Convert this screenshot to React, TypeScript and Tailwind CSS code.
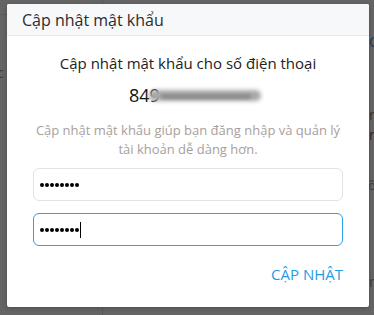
import React from 'react'

const FONT = { fontFamily: '"Open Sans", "Noto Sans", sans-serif' }

function Dots() {
  return (
    <span className="flex items-center gap-[1px]">
      {Array.from({ length: 8 }).map((_, i) => (
        <span key={i} className="h-[4px] w-[4px] rounded-full bg-black" />
      ))}
    </span>
  )
}

function PasswordField({ focused }: { focused?: boolean }) {
  return (
    <div
      className={
        'flex h-[33px] items-center rounded-[6px] bg-white px-[6px] ' +
        (focused ? 'border-[1.5px] border-[#2ba3ea]' : 'border border-[#e3e3e3]')
      }
    >
      <Dots />
      {focused && <span className="ml-[1px] h-[16px] w-px bg-black" />}
    </div>
  )
}

export default function App() {
  return (
    <div className="relative h-[315px] w-[374px] overflow-hidden bg-[#656565]" style={FONT}>
      {/* page behind the overlay */}
      <div aria-hidden="true" className="absolute left-[102px] top-0 h-full w-px bg-[#5a5a5a]" />
      <div aria-hidden="true" className="absolute left-0 top-[14px] h-px w-[8px] bg-[#5a5a5a]" />
      <span aria-hidden="true" className="absolute left-[-3px] top-[62px] text-[14px] text-[#3e3e3e]">c</span>
      <span aria-hidden="true" className="absolute left-[369px] top-[30px] text-[15px] text-[#1d3f5a]">C</span>
      <span aria-hidden="true" className="absolute left-[369px] top-[104px] text-[14px] text-[#3a3330]">r</span>
      <span aria-hidden="true" className="absolute left-[369px] top-[124px] text-[14px] text-[#2a2a2a]">n</span>
      <span aria-hidden="true" className="absolute left-[368px] top-[176px] text-[13px] text-[#3e3e3e]">ồ</span>
      <span aria-hidden="true" className="absolute left-[369px] top-[271px] text-[14px] text-[#3e3e3e]">n</span>

      <div className="pl-[7px] pt-[4px]">
        <div className="relative flex h-[303px] w-[362px] flex-col rounded-[2px] bg-white shadow-[0_1px_4px_rgba(0,0,0,0.25)]">
          <div className="flex h-[32px] items-center rounded-t-[2px] border-b border-[#e7e9ec] bg-[#f7f8fa] px-[15px] text-[16px] text-[#2b2b2b]">
            Cập nhật mật khẩu
          </div>
          <div className="flex flex-col px-[26px] text-center">
            <p className="mt-[16px] text-[15px] leading-[22px] text-[#222]">
              Cập nhật mật khẩu cho số điện thoại
            </p>
            <div className="relative mt-[11px] h-[20px]">
              <span className="absolute left-[96px] top-0 text-[18px] leading-[20px] text-[#111]">849</span>
              <div className="absolute left-[116px] top-[5px] h-[11px] w-[112px] rounded-full bg-[#a8a8a8] blur-[2px]" />
              <div className="absolute left-[128px] top-[9px] h-[5px] w-[90px] rounded-full bg-[#8e8e8e] blur-[1.5px]" />
            </div>
            <p className="mt-[16px] text-[13px] leading-[19px] text-[#a89e9c]">
              Cập nhật mật khẩu giúp bạn đăng nhập và quản lý tài khoản dễ dàng hơn.
            </p>
            <div className="mt-[9px] flex flex-col gap-[12px]">
              <PasswordField />
              <PasswordField focused />
            </div>
            <div className="mt-[18px] flex justify-end">
              <button className="text-[15px] leading-[20px] text-[#1f9ce6]">CẬP NHẬT</button>
            </div>
          </div>
        </div>
      </div>
    </div>
  )
}
